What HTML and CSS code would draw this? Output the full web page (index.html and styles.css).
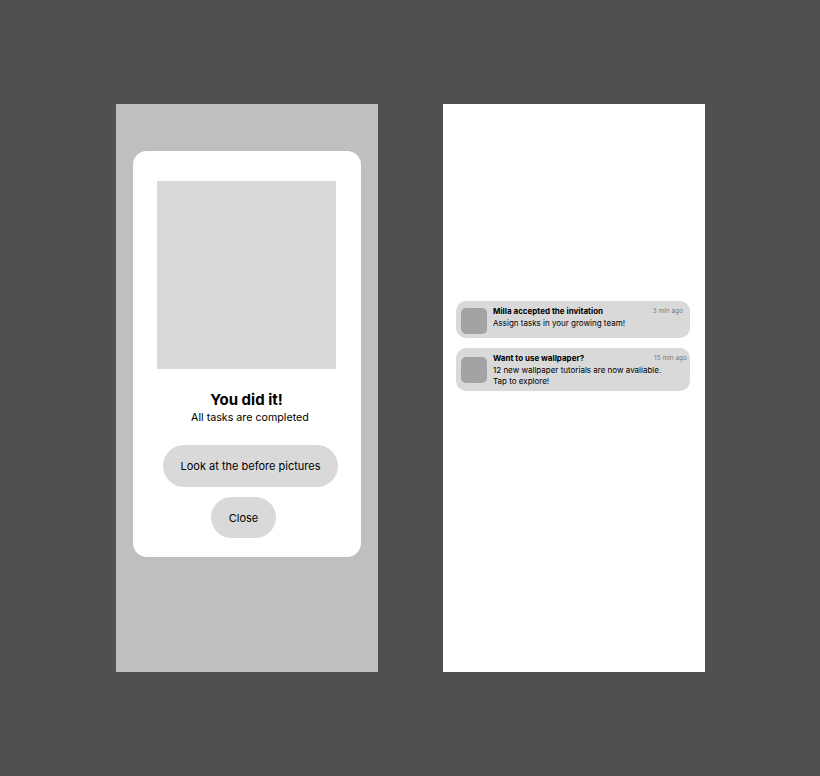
FILE: index.html
```html
<!DOCTYPE html>
<html>
<head>
<meta charset="utf-8">
<link rel="stylesheet" href="styles.css">
</head>
<body>
<div class="canvas">
  <div class="frame frame-modal">
    <div class="card">
      <div class="placeholder"></div>
      <h1 class="title">You did it!</h1>
      <p class="subtitle">All tasks are completed</p>
      <div class="actions">
        <button class="pill pill-primary">Look at the before pictures</button>
        <button class="pill pill-close">Close</button>
      </div>
    </div>
  </div>
  <div class="frame frame-notes">
    <div class="notes">
      <div class="note">
        <div class="avatar"></div>
        <div class="note-text">
          <div class="note-title">Milla accepted the invitation</div>
          <div class="note-body">Assign tasks in your growing team!</div>
        </div>
        <div class="note-time">3 min ago</div>
      </div>
      <div class="note">
        <div class="avatar"></div>
        <div class="note-text">
          <div class="note-title">Want to use wallpaper?</div>
          <div class="note-body">12 new wallpaper tutorials are now avaliable.<br>Tap to explore!</div>
        </div>
        <div class="note-time note-time-wide">15 min ago</div>
      </div>
    </div>
  </div>
</div>
</body>
</html>
```

FILE: styles.css
```css
html, body {
  margin: 0;
  padding: 0;
  background: #505050;
  font-family: Inter, "Liberation Sans", sans-serif;
  color: #000;
}
.canvas {
  display: flex;
  gap: 65px;
  padding: 104px 0 0 116px;
}
.frame {
  width: 262px;
  height: 568px;
  box-sizing: border-box;
}
.frame-modal {
  background: #bfbfbf;
  padding: 47px 0 0 17px;
}
.card {
  width: 228px;
  box-sizing: border-box;
  background: #fff;
  border-radius: 14px;
  padding: 30px 25px 19px 24px;
  display: flex;
  flex-direction: column;
  align-items: center;
}
.placeholder {
  width: 179px;
  height: 188px;
  background: #d9d9d9;
}
.title {
  margin: 21px 0 0;
  font-size: 15px;
  line-height: 20px;
  font-weight: 700;
}
.subtitle {
  margin: 0 0 0 7px;
  font-size: 10.7px;
  line-height: 16px;
}
.actions {
  margin-top: 19px;
  display: flex;
  flex-direction: column;
  align-items: center;
  gap: 10px;
}
.pill {
  height: 42px;
  padding: 0 18px;
  border: none;
  border-radius: 21px;
  background: #d9d9d9;
  font-family: Inter, "Liberation Sans", sans-serif;
  font-size: 11px;
  color: #000;
  white-space: nowrap;
}
.pill-primary {
  margin-left: 8px;
}
.pill-close {
  height: 41px;
  margin-right: 6px;
}
.frame-notes {
  background: #fff;
  padding: 197px 15px 0 13px;
}
.notes {
  display: flex;
  flex-direction: column;
  gap: 10px;
}
.note {
  display: flex;
  align-items: flex-start;
  background: #d9d9d9;
  border-radius: 10px;
  padding: 5px 5px 3px 5px;
  min-height: 37px;
  box-sizing: border-box;
}
.avatar {
  flex: none;
  width: 26px;
  height: 26px;
  border-radius: 5px;
  background: #a3a3a3;
  align-self: center;
  margin-right: 6px;
}
.note-text {
  flex: 1;
  min-width: 0;
  font-size: 8px;
  line-height: 11.5px;
  white-space: nowrap;
}
.note-title {
  font-weight: 700;
}
.note-time {
  flex: none;
  font-size: 6.5px;
  line-height: 11px;
  color: #7a7a7a;
  margin-right: 2px;
}
.note-time-wide {
  margin-right: -2px;
}
```
